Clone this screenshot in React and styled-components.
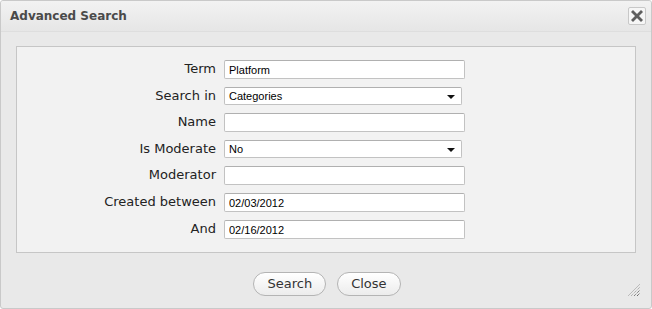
import styled, { createGlobalStyle } from 'styled-components';

const GlobalStyle = createGlobalStyle`
  html, body {
    margin: 0;
    padding: 0;
    background: #ffffff;
  }
  * {
    box-sizing: border-box;
  }
`;

const fields = [
  { label: 'Term', type: 'text', value: 'Platform' },
  { label: 'Search in', type: 'select', value: 'Categories' },
  { label: 'Name', type: 'text', value: '' },
  { label: 'Is Moderate', type: 'select', value: 'No' },
  { label: 'Moderator', type: 'text', value: '' },
  { label: 'Created between', type: 'text', value: '02/03/2012' },
  { label: 'And', type: 'text', value: '02/16/2012' },
];

export default function App() {
  return (
    <>
      <GlobalStyle />
      <Dialog>
        <TitleBar>
          <Title>Advanced Search</Title>
          <CloseIcon aria-label='close'>
            <svg width='14' height='14' viewBox='0 0 14 14'>
              <path
                d='M1 3 L3 1 L7 5 L11 1 L13 3 L9 7 L13 11 L11 13 L7 9 L3 13 L1 11 L5 7 Z'
                fill='#5e5e5e'
              />
            </svg>
          </CloseIcon>
        </TitleBar>

        <Body>
          <Panel>
            <FormGrid>
              {fields.map((f) => (
                <Row key={f.label}>
                  <Label>{f.label}</Label>
                  {f.type === 'select' ? (
                    <SelectBox>
                      <span>{f.value}</span>
                      <Arrow />
                    </SelectBox>
                  ) : (
                    <TextField defaultValue={f.value} />
                  )}
                </Row>
              ))}
            </FormGrid>
          </Panel>
        </Body>

        <Footer>
          <PillButton>Search</PillButton>
          <PillButton>Close</PillButton>
          <Grip>
            <svg width='14' height='14' viewBox='0 0 14 14'>
              <path d='M1 13 L13 1' stroke='#bbb' strokeWidth='1' />
              <path d='M4 13 L13 4' stroke='#999' strokeWidth='1' strokeDasharray='1 1' />
              <path d='M7 13 L13 7' stroke='#555' strokeWidth='1' strokeDasharray='1 1' />
              <path d='M10 13 L13 10' stroke='#333' strokeWidth='1' strokeDasharray='1 1' />
            </svg>
          </Grip>
        </Footer>
      </Dialog>
    </>
  );
}

/**
 * STYLED COMPONENTS
 */
const Dialog = styled.div`
  width: 652px;
  height: 309px;
  background-color: #e9e9e9;
  border: 1px solid #c9c9c9;
  border-radius: 3px;
  display: flex;
  flex-direction: column;
  font-family: 'DejaVu Sans', Verdana, sans-serif;
  overflow: hidden;
`;

const TitleBar = styled.div`
  height: 31px;
  display: flex;
  align-items: center;
  justify-content: space-between;
  padding: 0 5px 0 9px;
  background: linear-gradient(#f2f2f2, #e6e6e6);
  border-bottom: 1px solid #dedede;
`;

const Title = styled.h1`
  margin: 0;
  font-size: 12px;
  font-weight: bold;
  color: #4a4a4a;
`;

const CloseIcon = styled.div`
  width: 18px;
  height: 18px;
  border: 1px solid #c8c8c8;
  border-radius: 2px;
  background: #f6f6f6;
  display: flex;
  align-items: center;
  justify-content: center;
`;

const Body = styled.div`
  padding: 14px 15px 0 15px;
`;

const Panel = styled.div`
  height: 207px;
  border: 1px solid #c6c6c6;
  background-color: #f2f2f2;
  padding: 13px 0 0 0;
`;

const FormGrid = styled.div`
  display: flex;
  flex-direction: column;
  gap: 8px;
`;

const Row = styled.div`
  display: grid;
  grid-template-columns: 199px 241px;
  column-gap: 8px;
  align-items: center;
`;

const Label = styled.label`
  text-align: right;
  font-size: 13px;
  color: #222;
  position: relative;
  top: -1px;
`;

const TextField = styled.input.attrs({ type: 'text' })`
  height: 19px;
  width: 241px;
  margin: 0;
  padding: 0 4px;
  border: 1px solid #c2c2c2;
  border-top-color: #b0b0b0;
  border-radius: 2px;
  background: #fff;
  font-family: 'Liberation Sans', Arial, sans-serif;
  font-size: 11px;
  color: #000;
  outline: none;
`;

const SelectBox = styled.div`
  height: 18px;
  width: 238px;
  display: flex;
  align-items: center;
  justify-content: space-between;
  padding: 0 6px 0 4px;
  border: 1px solid #c2c2c2;
  border-top-color: #b0b0b0;
  border-radius: 2px;
  background: #fff;
  font-family: 'Liberation Sans', Arial, sans-serif;
  font-size: 11px;
  color: #000;
`;

const Arrow = styled.span`
  width: 0;
  height: 0;
  border-left: 4px solid transparent;
  border-right: 4px solid transparent;
  border-top: 4px solid #111;
  margin-top: 2px;
`;

const Footer = styled.div`
  flex: 1;
  display: flex;
  justify-content: center;
  align-items: center;
  gap: 11px;
  padding: 6px 0 0 2px;
  position: relative;
`;

const PillButton = styled.button`
  height: 24px;
  padding: 0 13px;
  border: 1px solid #b4b4b4;
  border-radius: 12px;
  background: linear-gradient(#ffffff, #ececec);
  font-family: 'DejaVu Sans', Verdana, sans-serif;
  font-size: 13px;
  color: #333;
  cursor: pointer;
`;

const Grip = styled.div`
  position: absolute;
  right: 10px;
  bottom: 11px;
  line-height: 0;
`;
